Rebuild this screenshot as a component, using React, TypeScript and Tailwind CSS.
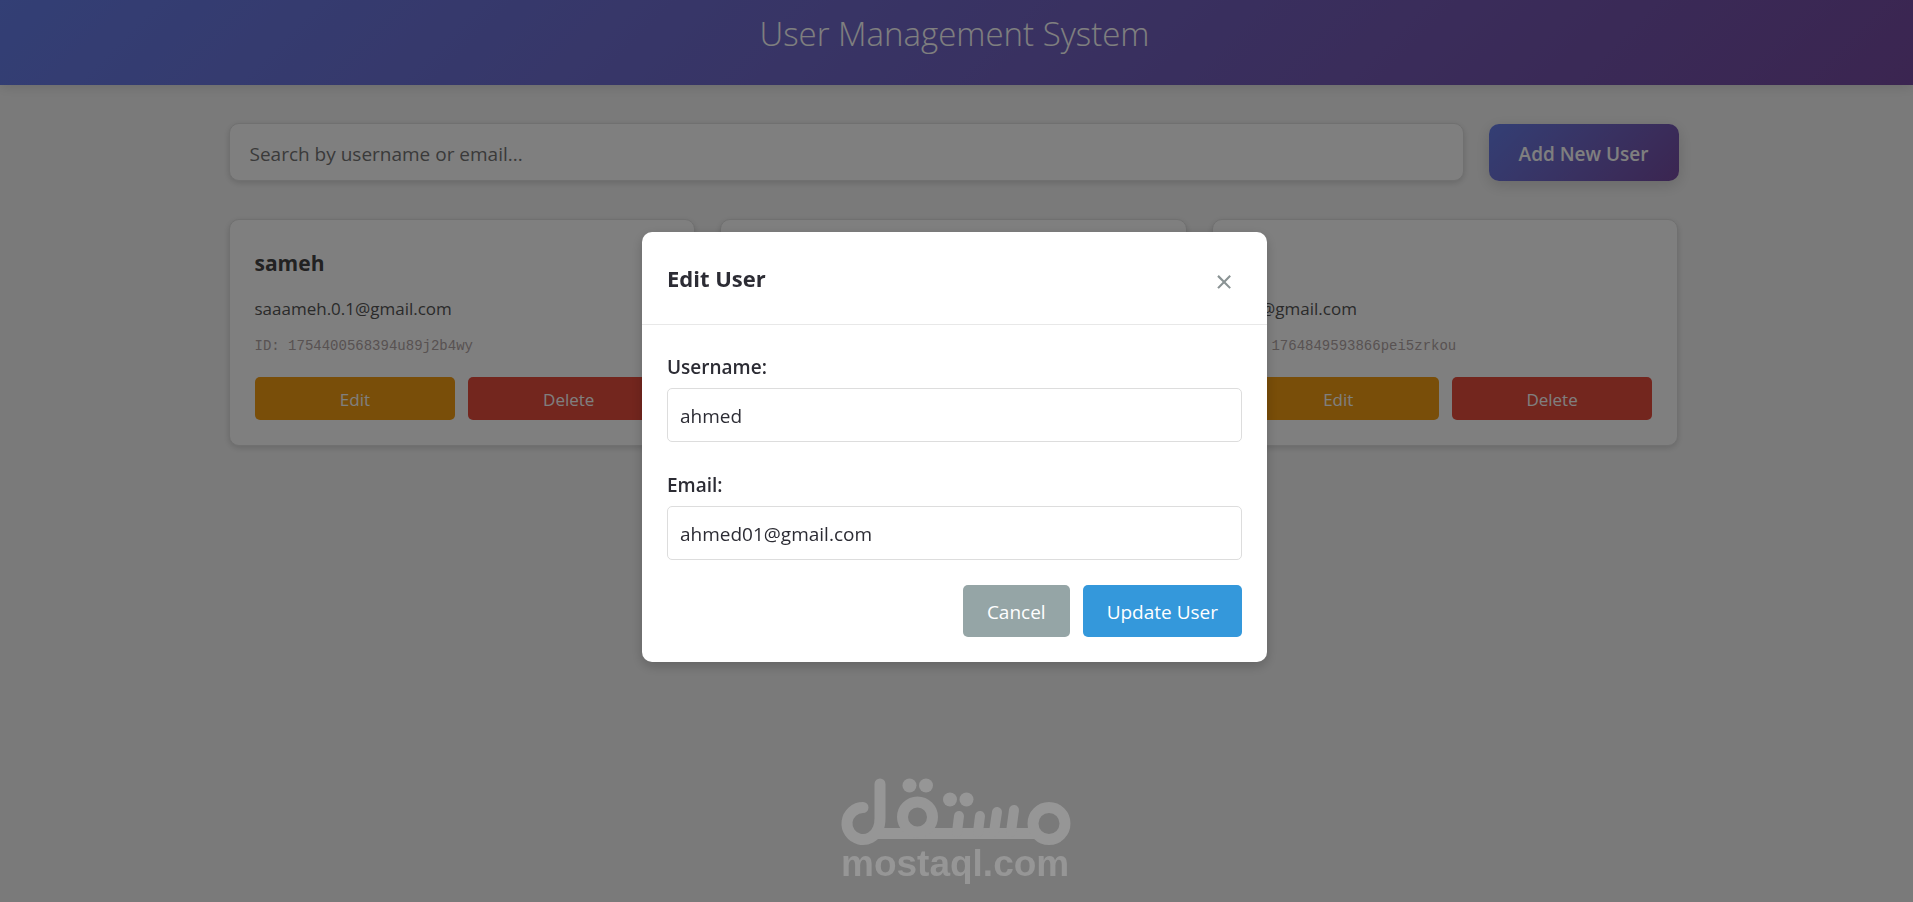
import { useState } from "react";

type User = { name: string; email: string; id: string };

const users: User[] = [
  { name: "sameh", email: "saaameh.0.1@gmail.com", id: "1754400568394u89j2b4wy" },
  { name: "ahmed", email: "ahmed01@gmail.com", id: "1764849561207k3x9qmt" },
  { name: "ali", email: "aly@gmail.com", id: "1764849593866pei5zrkou" },
];

function UserCard({ user }: { user: User }) {
  return (
    <article className="rounded-[10px] border border-[#e0e0e0] bg-white p-[25px] shadow-[0_2px_6px_rgba(0,0,0,0.15)]">
      <h2 className="text-[21px] leading-9 font-bold text-[#444]">{user.name}</h2>
      <p className="mt-4 text-[17px] leading-6 text-[#555]">{user.email}</p>
      <p className="mt-[13px] font-['Liberation_Mono',monospace] text-sm leading-6 text-[#b0a4a4]">
        ID: {user.id}
      </p>
      <div className="mt-[19px] flex gap-[13px]">
        <button type="button" className="h-[43px] flex-1 rounded-[5px] bg-[#f39c12] pt-0.5 text-[17px] text-white">
          Edit
        </button>
        <button type="button" className="h-[43px] flex-1 rounded-[5px] bg-[#e74c3c] pt-0.5 text-[17px] text-white">
          Delete
        </button>
      </div>
    </article>
  );
}

type FieldProps = {
  id: string;
  label: string;
  type: string;
  value: string;
  onChange: (value: string) => void;
};

function Field({ id, label, type, value, onChange }: FieldProps) {
  return (
    <div>
      <label htmlFor={id} className="mb-1 block text-[19px] leading-[34px] font-semibold text-[#2c2c34]">
        {label}
      </label>
      <input
        id={id}
        type={type}
        value={value}
        onChange={(e) => onChange(e.target.value)}
        className="block h-[54px] w-full rounded-[5px] border border-[#ddd] px-3 pt-0.5 text-[19px] text-[#2c2c34]"
      />
    </div>
  );
}

function EditDialog() {
  const [username, setUsername] = useState("ahmed");
  const [email, setEmail] = useState("ahmed01@gmail.com");
  return (
    <div className="fixed inset-0 flex items-center justify-center bg-black/50 pr-1 pb-2">
      <div
        role="dialog"
        aria-modal="true"
        aria-labelledby="dialog-title"
        className="w-full max-w-[625px] rounded-[10px] bg-white shadow-[0_4px_12px_rgba(0,0,0,0.2)]"
      >
        <div className="flex items-center justify-between border-b border-[#e8e8e8] px-[25px] py-[26px]">
          <h2 id="dialog-title" className="text-[22px] leading-10 font-bold text-[#2c2c34]">
            Edit User
          </h2>
          <button
            type="button"
            aria-label="Close"
            className="flex size-9 items-center justify-center pt-1.5 text-[31px] leading-none text-[#8a9394]"
          >
            ×
          </button>
        </div>
        <form className="p-[25px]" onSubmit={(e) => e.preventDefault()}>
          <div className="flex flex-col gap-[26px]">
            <Field id="username" label="Username:" type="text" value={username} onChange={setUsername} />
            <Field id="email" label="Email:" type="email" value={email} onChange={setEmail} />
          </div>
          <div className="mt-[25px] flex justify-end gap-[13px]">
            <button type="button" className="h-[52px] rounded-[5px] bg-[#95a5a6] px-6 pt-0.5 text-[19px] text-white">
              Cancel
            </button>
            <button type="submit" className="h-[52px] rounded-[5px] bg-[#3498db] px-6 pt-0.5 text-[19px] text-white">
              Update User
            </button>
          </div>
        </form>
      </div>
    </div>
  );
}

function Watermark() {
  return (
    <div className="pointer-events-none fixed inset-x-0 bottom-0 flex justify-center pr-1">
      <svg
        viewBox="0 0 250 132"
        className="h-[132px] w-[250px] fill-none stroke-[#969696]"
        role="img"
        aria-label="mostaql.com"
      >
        <g strokeWidth="11" strokeLinecap="round" strokeLinejoin="round">
          <path d="M33 37.5A16 16 0 1 0 48 59Q50 55 50 48V14" />
          <path d="M46 63.500H206" strokeLinecap="butt" />
          <circle cx="87.500" cy="47" r="15" />
          <circle cx="219" cy="53.500" r="16" />
          <path d="M129 46L127 62M150 46L148 62M167 42L164 62M184 40L181 62" strokeWidth="10" />
        </g>
        <g stroke="none" className="fill-[#969696]">
          <circle cx="79.500" cy="15.500" r="7" />
          <circle cx="96" cy="15.500" r="7" />
          <circle cx="120" cy="29.500" r="7" />
          <circle cx="136.500" cy="29.500" r="7" />
          <text x="11" y="106" fontFamily="Liberation Sans, sans-serif" fontSize="37" fontWeight="700">
            mostaql.com
          </text>
        </g>
      </svg>
    </div>
  );
}

export default function App() {
  return (
    <div className="min-h-screen bg-[#f5f5f5] font-['Open_Sans',sans-serif]">
      <header className="bg-linear-135 from-[#667eea] to-[#764ba2] pt-2.5 pb-[27px] pr-1 text-center shadow-[0_2px_12px_rgba(0,0,0,0.12)]">
        <h1 className="text-[33px] leading-[48px] font-light text-white">User Management System</h1>
      </header>
      <main className="mx-auto w-full max-w-[1456px] pr-1.5 pt-[38px]">
        <div className="mb-[38px] flex items-center gap-[25px]">
          <input
            type="search"
            aria-label="Search users"
            placeholder="Search by username or email..."
            className="h-[58px] min-w-0 flex-1 rounded-[10px] border border-[#e0e0e0] bg-white px-5 pt-1 text-[19px] shadow-[0_2px_6px_rgba(0,0,0,0.15)] placeholder:text-[#757575]"
          />
          <button
            type="button"
            className="h-[57px] rounded-[10px] bg-linear-135 from-[#667eea] to-[#764ba2] px-[30px] pt-1 text-[19px] font-semibold text-white shadow-[0_4px_15px_rgba(0,0,0,0.15)]"
          >
            Add New User
          </button>
        </div>
        <section className="grid grid-cols-3 gap-[25px]">
          {users.map((user) => (
            <UserCard key={user.id} user={user} />
          ))}
        </section>
      </main>
      <EditDialog />
      <Watermark />
    </div>
  );
}
